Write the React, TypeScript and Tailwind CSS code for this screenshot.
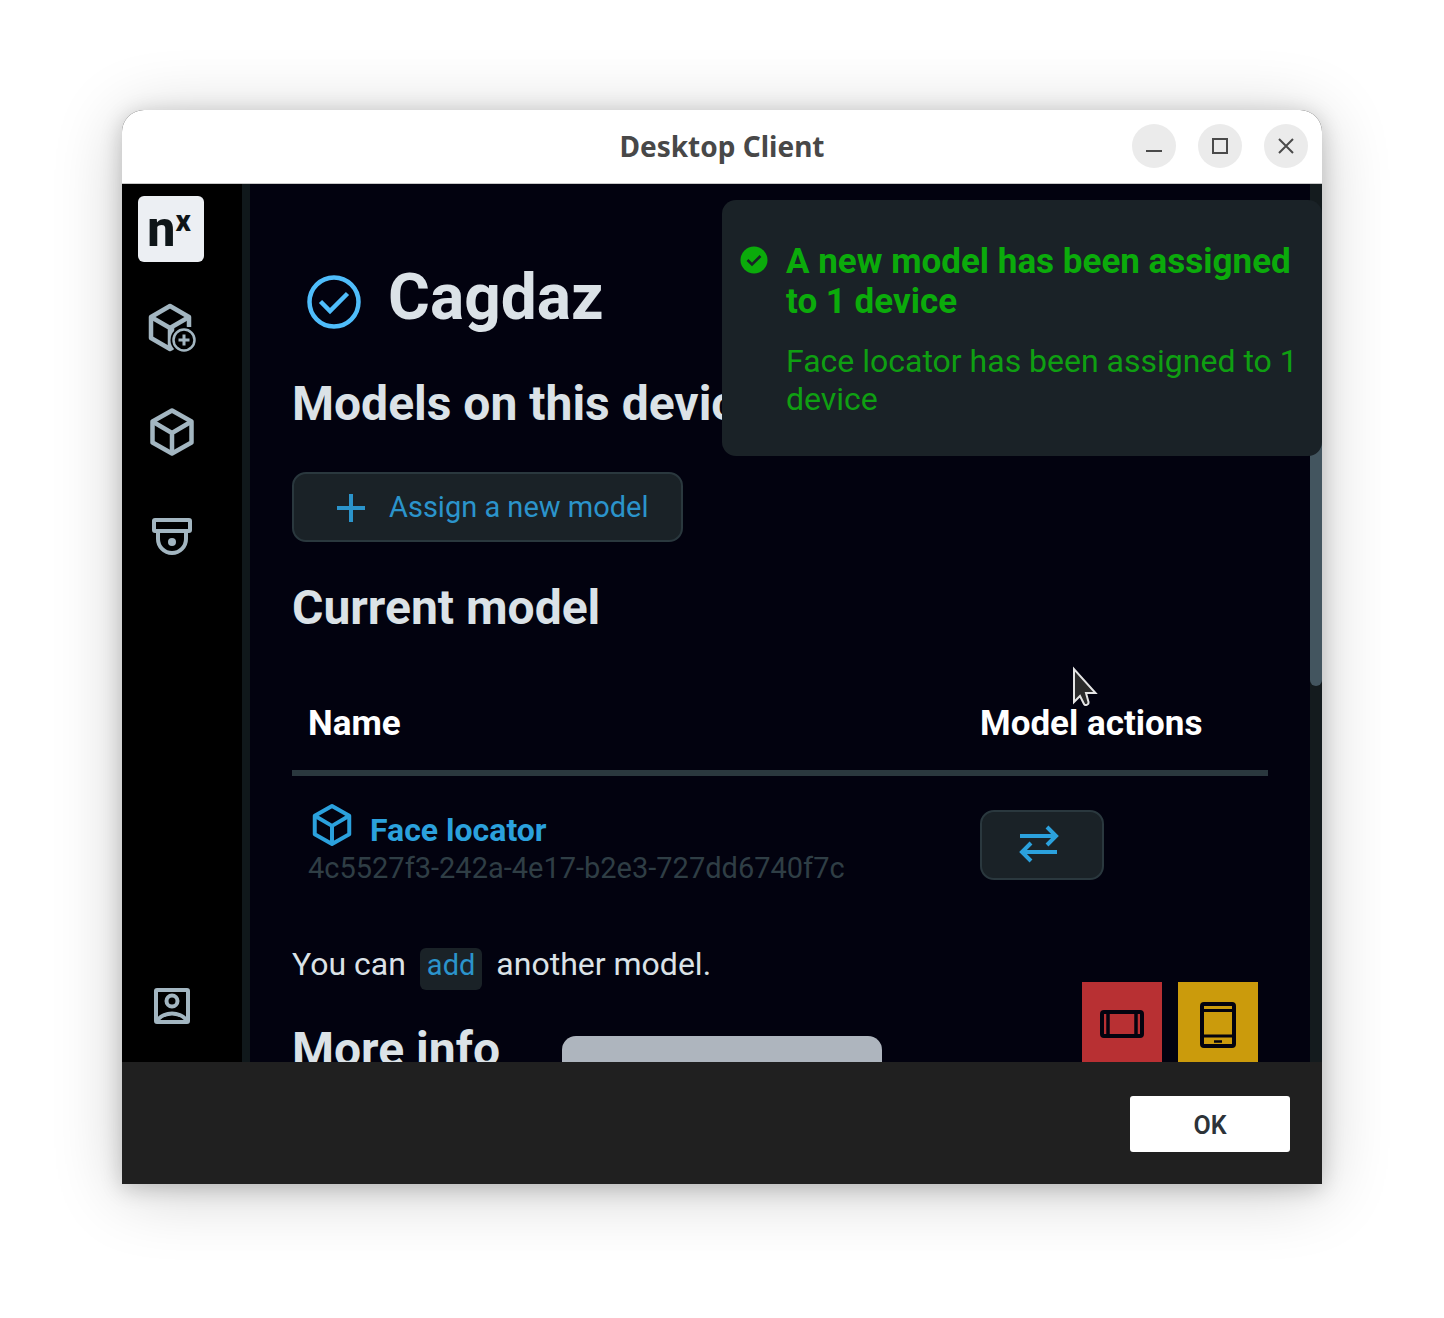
import type { ReactNode } from "react";

type IconProps = { className?: string };

function CubeAddIcon() {
  return (
    <svg width="52" height="52" viewBox="0 0 52 52" fill="none" stroke="currentColor" strokeWidth="4.5" strokeLinejoin="round">
      <path d="M43 25V15L24 4 5 15v21l19 11 2-1V26" />
      <path d="M5 15l19 11 19-11M24 26v21" />
      <circle cx="38" cy="38" r="13.5" fill="#000" stroke="none" />
      <circle cx="38" cy="38" r="10.5" strokeWidth="2.5" />
      <path d="M38 32.5v11M32.5 38h11" strokeWidth="3" />
    </svg>
  );
}

function CubeIcon({ className }: IconProps) {
  return (
    <svg className={className} viewBox="0 0 48 52" fill="none" stroke="currentColor" strokeWidth="4.5" strokeLinejoin="round">
      <path d="M24 4.500 43.500 15.500v21L24 47.500 4.500 36.500v-21z" />
      <path d="M4.500 15.500 24 27l19.500-11.500M24 27v20.500" />
    </svg>
  );
}

function DomeCameraIcon() {
  return (
    <svg width="44" height="40" viewBox="0 0 44 40" fill="none" stroke="currentColor" strokeWidth="4" strokeLinejoin="round">
      <rect x="4" y="4" width="36" height="11" rx="1" />
      <path d="M8 15v8a14 14 0 0 0 28 0v-8" />
      <circle cx="22" cy="26" r="4" fill="currentColor" stroke="none" />
    </svg>
  );
}

function AccountIcon() {
  return (
    <svg width="40" height="40" viewBox="0 0 40 40" fill="none" stroke="currentColor" strokeWidth="4" strokeLinejoin="round">
      <rect x="4" y="4" width="32" height="32" rx="1" />
      <circle cx="20" cy="15" r="5.500" />
      <path d="M5 34.500c4-5 9-7 15-7s11 2 15 7" />
    </svg>
  );
}

function CheckCircleIcon() {
  return (
    <svg width="56" height="56" viewBox="0 0 56 56" fill="none" stroke="#4fbdfb" strokeWidth="4.5">
      <circle cx="28" cy="28" r="24.500" />
      <path d="M14.500 27.500 24 37 41.500 19.500" />
    </svg>
  );
}

function CheckBadgeIcon() {
  return (
    <svg width="28" height="28" viewBox="0 0 28 28" fill="none">
      <circle cx="14" cy="14" r="13.500" fill="#0bab0b" />
      <path d="M7.500 14l4.500 4.500 8.500-8.500" stroke="#1a2227" strokeWidth="2.5" />
    </svg>
  );
}

function PlusIcon() {
  return (
    <svg width="28" height="28" viewBox="0 0 28 28" fill="none" stroke="currentColor" strokeWidth="4">
      <path d="M14 0v28M0 14h28" />
    </svg>
  );
}

function SwapIcon() {
  return (
    <svg width="40" height="38" viewBox="0 0 40 38" fill="none" stroke="currentColor" strokeWidth="4">
      <path d="M1 11h36M28 2l9 9-9 9" />
      <path d="M38 27H3M12 18l-9 9 9 9" />
    </svg>
  );
}

function LandscapeIcon() {
  return (
    <svg width="44" height="28" viewBox="0 0 44 28" fill="none" stroke="#03030f" strokeWidth="4">
      <rect x="2" y="2" width="40" height="24" rx="2" />
      <path d="M8 2v24M36 2v24" strokeWidth="3.500" />
    </svg>
  );
}

function TabletIcon() {
  return (
    <svg width="36" height="46" viewBox="0 0 36 46" fill="none" stroke="#03030f" strokeWidth="4">
      <rect x="2" y="2" width="32" height="42" rx="2" />
      <path d="M2 8.500h32M2 34h32" strokeWidth="3" />
      <path d="M14 39.500h8" strokeWidth="2.500" />
    </svg>
  );
}

function PointerIcon() {
  return (
    <svg width="28" height="42" viewBox="0 0 28 42">
      <path d="M2 3v33l6-6 4 8c1 2 5 1 4.500-2L14 27h9.500z" fill="#2b2b2b" stroke="#e4e4e4" strokeWidth="2" />
    </svg>
  );
}

function WindowButton({ label, children }: { label: string; children: ReactNode }) {
  return (
    <button type="button" aria-label={label} className="flex size-11 items-center justify-center rounded-full bg-[#ebebeb]">
      <svg width="18" height="18" viewBox="0 0 18 18" fill="none" stroke="#4a4a4a" strokeWidth="2">
        {children}
      </svg>
    </button>
  );
}

function NavButton({ label, children }: { label: string; children: ReactNode }) {
  return (
    <button type="button" aria-label={label} className="flex h-[72px] w-[68px] items-center justify-center">
      {children}
    </button>
  );
}

function TitleBar() {
  return (
    <header className="grid h-[74px] shrink-0 grid-cols-[1fr_auto_1fr] items-center border-b border-[#c9c9c9] bg-white px-[14px] pb-px">
      <span />
      <h1 className="pb-px font-['Noto_Sans'] text-[28px] leading-10 font-bold text-[#484848]">Desktop Client</h1>
      <div className="flex justify-end gap-[22px]">
        <WindowButton label="Minimize">
          <path d="M1 14h16" />
        </WindowButton>
        <WindowButton label="Maximize">
          <path d="M2 2h14v14H2z" />
        </WindowButton>
        <WindowButton label="Close">
          <path d="M2 2l14 14M16 2L2 16" />
        </WindowButton>
      </div>
    </header>
  );
}

function Sidebar() {
  return (
    <nav className="flex w-32 shrink-0 flex-col border-r-8 border-[#10181b] bg-black pt-3 pb-5 pl-4 text-[#a3b6c1]">
      <a href="#home" aria-label="Home" className="flex size-[66px] justify-center rounded-md bg-[#eceff3] pr-1 text-[#0e1518]">
        <span className="text-[50px] leading-[66px] font-extrabold">n</span>
        <span className="text-[30px] leading-[50px] font-extrabold">x</span>
      </a>
      <div className="mt-[30px] flex flex-col gap-8">
        <NavButton label="Add model">
          <CubeAddIcon />
        </NavButton>
        <NavButton label="Models">
          <CubeIcon className="h-[52px] w-12" />
        </NavButton>
        <NavButton label="Devices">
          <DomeCameraIcon />
        </NavButton>
      </div>
      <div className="mt-auto">
        <NavButton label="Account">
          <AccountIcon />
        </NavButton>
      </div>
    </nav>
  );
}

function ModelTable() {
  return (
    <table className="mt-10 w-full border-collapse text-left">
      <thead>
        <tr className="border-b-[6px] border-[#2a383e] text-[35px] leading-10 text-white">
          <th className="px-4 pt-7 pb-[26px] font-bold">Name</th>
          <th className="w-[304px] px-4 pt-7 pb-[26px] font-bold">Model actions</th>
        </tr>
      </thead>
      <tbody>
        <tr className="align-top">
          <td className="px-4 pt-[34px]">
            <a href="#face-locator" className="flex h-10 text-[32px] leading-10 font-bold text-[#2ba1dd]">
              <CubeIcon className="mr-[14px] -mt-2 h-[46px] w-12" />
              Face locator
            </a>
            <div className="text-[29px] leading-9 text-[#2f3e45]">4c5527f3-242a-4e17-b2e3-727dd6740f7c</div>
          </td>
          <td className="px-4 pt-[34px]">
            <button
              type="button"
              aria-label="Replace model"
              className="flex h-[70px] w-[124px] items-center justify-center rounded-[14px] border-2 border-[#2a383e] bg-[#1a2227] pr-[6px] pb-[2px] text-[#2ba1dd]"
            >
              <SwapIcon />
            </button>
          </td>
        </tr>
      </tbody>
    </table>
  );
}

function Toast() {
  return (
    <div role="status" className="absolute top-4 right-0 flex h-64 w-[600px] gap-[18px] rounded-[14px] bg-[#1a2227] pt-[42px] pl-[18px] text-[#0bab0b]">
      <div className="shrink-0 pt-1">
        <CheckBadgeIcon />
      </div>
      <div>
        <p className="text-[35px] leading-10 font-bold">
          A new model has been assigned
          <br />
          to 1 device
        </p>
        <p className="mt-5 text-[32px] leading-[38px] text-[#0f9f12]">
          Face locator has been assigned to 1
          <br />
          device
        </p>
      </div>
    </div>
  );
}

export default function App() {
  return (
    <div className="flex h-screen flex-col bg-white px-[122px] pt-[110px] pb-[134px] font-['Roboto',sans-serif]">
      <div className="flex min-h-0 flex-1 flex-col overflow-hidden rounded-t-[22px] bg-[#202020] shadow-[0_8px_70px_rgba(0,0,0,0.2),0_4px_22px_rgba(0,0,0,0.2)]">
        <TitleBar />
        <div className="relative flex min-h-0 flex-1 overflow-hidden bg-[#02020f]">
          <Sidebar />
          <main className="min-w-0 flex-1 overflow-hidden px-[42px] pt-[78px] text-[#dbe2e7]">
            <div className="flex items-center gap-[26px] pl-[14px]">
              <div className="pt-2">
                <CheckCircleIcon />
              </div>
              <h2 className="text-[64px] leading-[72px] font-bold">Cagdaz</h2>
            </div>
            <h3 className="mt-[42px] text-[48px] leading-[56px] font-bold">Models on this device</h3>
            <button
              type="button"
              className="mt-10 flex h-[70px] items-center gap-6 rounded-[14px] border-2 border-[#2a383e] bg-[#1a2227] pt-[2px] pr-8 pl-[43px] text-[29px] text-[#2b94cb]"
            >
              <PlusIcon />
              Assign a new model
            </button>
            <h3 className="mt-[38px] text-[48px] leading-[56px] font-bold">Current model</h3>
            <ModelTable />
            <p className="mt-[61px] flex items-baseline text-[32px] leading-[34px]">
              You can
              <button type="button" className="mx-[14px] rounded-md bg-[#1a2227] px-[7px] pb-2 text-[29px] leading-[34px] text-[#2b94cb]">
                add
              </button>
              another model.
            </p>
            <h3 className="mt-8 text-[48px] leading-[56px] font-bold">More info</h3>
          </main>
          <div className="w-3 shrink-0 bg-[#141b1e] pt-[200px]">
            <div className="h-[302px] rounded-full bg-[#43555f]" />
          </div>
          <div className="absolute bottom-0 left-[440px] h-[26px] w-80 rounded-t-[14px] bg-[#aeb5be]" />
          <div className="absolute right-16 bottom-0 flex gap-4">
            <button type="button" aria-label="Landscape view" className="flex size-20 items-center justify-center bg-[#b83033] pt-1">
              <LandscapeIcon />
            </button>
            <button type="button" aria-label="Tablet view" className="flex size-20 items-center justify-center bg-[#cb9b0c] pt-[6px]">
              <TabletIcon />
            </button>
          </div>
          <Toast />
          <div className="absolute top-[482px] right-[222px]">
            <PointerIcon />
          </div>
        </div>
        <footer className="flex h-[122px] shrink-0 items-center justify-end px-8 pt-[2px]">
          <button type="button" className="h-14 w-40 rounded-[3px] bg-white pt-1 text-[25px] font-semibold text-[#2d3338]">
            OK
          </button>
        </footer>
      </div>
    </div>
  );
}
